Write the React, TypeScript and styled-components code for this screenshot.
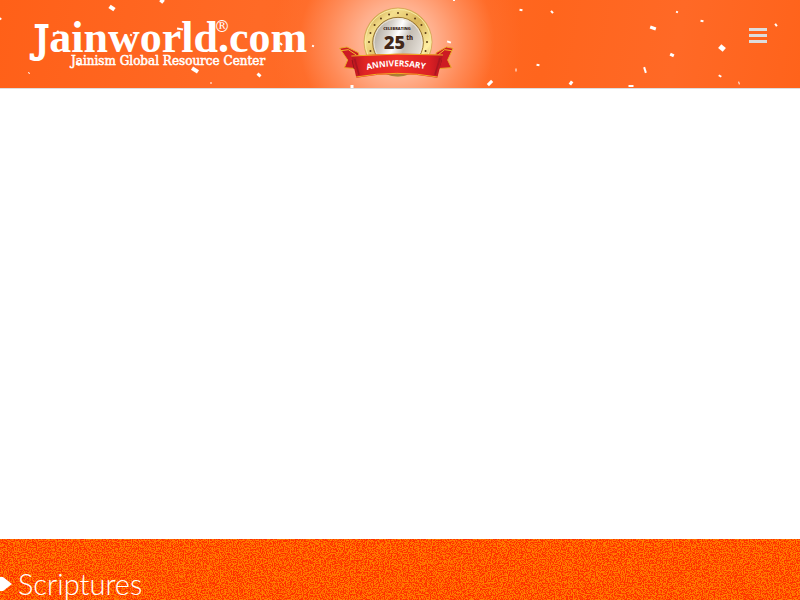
import React from "react";
import styled, { createGlobalStyle } from "styled-components";

const GlobalStyle = createGlobalStyle`
  * { box-sizing: border-box; }
  body { margin: 0; background: #fff; overflow-x: hidden; font-family: "Lato", sans-serif; }
`;

const Page = styled.div`
  display: flex;
  flex-direction: column;
  min-height: 100vh;
`;

const Header = styled.header`
  position: relative;
  display: flex;
  align-items: flex-start;
  padding: 0 33px 0 30px;
  min-height: 89px;
  border-bottom: 1px solid #ddd;
  background:
    radial-gradient(circle 125px at 397px 42px, #ffc3aa 0, #ffb08e 30%, rgba(255, 150, 105, 0.75) 55%, rgba(255, 120, 60, 0.3) 78%, rgba(255, 104, 36, 0) 100%),
    linear-gradient(100deg, #ff6018 0%, #ff6a26 32%, #ff6822 55%, #ff651d 68%, #ff6926 84%, #ff631b 100%);
`;

const Confetti = styled.svg`
  position: absolute;
  inset: 0;
  width: 100%;
  height: 100%;
  fill: #fff;
`;

const Brand = styled.a`
  position: relative;
  display: block;
  width: 280px;
  padding-top: 16px;
  color: #fff;
  text-decoration: none;
`;

const BrandArt = styled.svg`
  display: block;
  overflow: visible;
  fill: #fff;
  font-family: "DejaVu Serif", serif;
`;

const Badge = styled.svg`
  position: relative;
  display: block;
  margin: 6px 0 0 29px;
  overflow: visible;
  font-family: "Open Sans", sans-serif;
`;

const MenuButton = styled.button`
  position: relative;
  display: flex;
  flex-direction: column;
  gap: 3px;
  width: 18px;
  margin: 28px 0 0 auto;
  padding: 0;
  border: 0;
  background: none;
  cursor: pointer;
`;

const MenuBar = styled.span`
  height: 3px;
  background: #ddd;
`;

const Hero = styled.main`
  flex: 0 0 75vh;
  background: #fff;
`;

const Topics = styled.section`
  position: relative;
  flex: 1 0 auto;
  padding-top: 29px;
  background: #ff5500;
`;

const Grain = styled.svg`
  position: absolute;
  inset: 0;
  width: 100%;
  height: 100%;
`;

const TopicTitle = styled.h2`
  position: relative;
  display: flex;
  align-items: center;
  gap: 6px;
  margin: 0;
  color: #fff;
  font-size: 29px;
  line-height: 32px;
  font-weight: 300;
`;

/* x, y, width, height, rotation */
const flakes = [
  [112, 8, 6, 4, 35], [0, 19, 3, 2, -30], [162, 1, 4, 4, 40], [58, 32, 3, 2, 60],
  [131, 35, 2, 2, 20], [180, 29, 6, 2, 10], [29, 73, 2, 1, 40], [78, 64, 4, 3, 20],
  [195, 70, 7, 4, 32], [281, 44, 3, 2, 40], [313, 46, 2, 2, 20], [259, 75, 4, 3, 40],
  [211, 83, 2, 1, 0], [449, 42, 4, 2, 20], [352, 87, 3, 4, 0], [454, 0, 2, 2, 0],
  [521, 10, 3, 2, 10], [552, 12, 3, 2, 50], [538, 65, 3, 2, 10], [516, 70, 1, 3, 0],
  [490, 83, 6, 3, -45], [571, 83, 4, 3, -55], [631, 86, 5, 2, 0], [645, 70, 2, 6, -17],
  [677, 12, 2, 2, 20], [653, 28, 6, 3, 20], [702, 21, 3, 2, 10], [672, 55, 4, 3, 25],
  [722, 48, 6, 5, 40], [776, 25, 3, 2, 55], [720, 76, 3, 2, 30], [739, 83, 1, 3, -15],
];

const stars = Array.from({ length: 13 }, (_, i) => {
  const angle = ((162 + i * 18) * Math.PI) / 180;
  return [205 + 87 * Math.cos(angle), 126 + 87 * Math.sin(angle)];
});

function AnniversaryBadge() {
  return (
    <Badge width="114" height="72" viewBox="28 18 342 216" role="img" aria-label="Celebrating 25th anniversary">
      <defs>
        <linearGradient id="gold" x1="0" y1="0" x2="1" y2="1">
          <stop offset="0" stopColor="#b98b2e" />
          <stop offset=".25" stopColor="#f5e08e" />
          <stop offset=".5" stopColor="#d8b458" />
          <stop offset=".75" stopColor="#fff0a4" />
          <stop offset="1" stopColor="#9a6b21" />
        </linearGradient>
        <linearGradient id="silver" x1="0" x2="1" y1=".2" y2=".6">
          <stop offset="0" stopColor="#a9a39a" />
          <stop offset=".3" stopColor="#d7d2cb" />
          <stop offset=".48" stopColor="#ffffff" />
          <stop offset=".68" stopColor="#c5beb4" />
          <stop offset="1" stopColor="#e7e2db" />
        </linearGradient>
        <linearGradient id="ribbon" x1="0" x2="1">
          <stop offset="0" stopColor="#b8151e" />
          <stop offset=".15" stopColor="#e02424" />
          <stop offset=".5" stopColor="#ef3027" />
          <stop offset=".85" stopColor="#dc2024" />
          <stop offset="1" stopColor="#b8151e" />
        </linearGradient>
      </defs>
      <circle cx="205" cy="126" r="102" fill="url(#gold)" stroke="#c99d43" strokeWidth="2" />
      <circle cx="205" cy="126" r="98" fill="none" stroke="#f8e9a2" strokeWidth="3" />
      <circle cx="205" cy="128" r="76" fill="url(#silver)" stroke="#9b752c" strokeWidth="3" />
      <circle cx="205" cy="128" r="72" fill="none" stroke="#eee7d5" strokeWidth="3" />
      {stars.map(([x, y], i) => <circle key={i} cx={x} cy={y} r="3" fill="#5b3c16" />)}
      <text x="202" y="91" textAnchor="middle" fontSize="12" fontWeight="800" fill="#3a2418">CELEBRATING</text>
      <text x="163" y="147" fontSize="54" fontWeight="800" fill="#412718">25</text>
      <text x="230" y="119" fontSize="18" fontWeight="800" fill="#412718">th</text>
      <path d="M30 145L52 141L86 158L98 207L44 203L54 180Z" fill="#cd1b23" stroke="#e9a928" strokeWidth="3" />
      <path d="M370 145L350 141L320 158L306 207L365 203L354 180Z" fill="#cd1b23" stroke="#e9a928" strokeWidth="3" />
      <path d="M34 152L56 149L80 165M366 152L345 149L325 165" fill="none" stroke="#f2b92b" strokeWidth="3" />
      <path d="M66 180L72 206L86 210L78 178ZM337 180L329 206L318 210L326 178Z" fill="#80151b" />
      <path d="M166 221Q202 217 241 221Q205 238 166 221Z" fill="#a78135" />
      <path d="M65 167Q202 157 340 164L323 233Q202 211 80 233Z" fill="url(#ribbon)" />
      <path d="M65 168Q202 158 340 165M79 231Q202 209 324 231" fill="none" stroke="#f0ae25" strokeWidth="3" />
      <path d="M75 176L88 224M331 174L316 224" fill="none" stroke="#a91520" strokeWidth="5" />
      <path id="anniversaryLine" d="M112 210Q202 186 310 213" fill="none" />
      <text fontSize="25" fontWeight="700" fill="#fff"><textPath href="#anniversaryLine">ANNIVERSARY</textPath></text>
    </Badge>
  );
}

export default function App() {
  return (
    <>
      <GlobalStyle />
      <Page>
        <Header>
          <Confetti aria-hidden="true">
            {flakes.map(([x, y, w, h, r], i) => (
              <rect key={i} x={x - w / 2} y={y - h / 2} width={w} height={h} transform={`rotate(${r} ${x} ${y})`} />
            ))}
          </Confetti>
          <Brand href="#" aria-label="Jainworld.com">
            <BrandArt width="280" height="56" viewBox="30 16 280 56">
              <text x="34" y="52" fontSize="44" fontWeight="700" fontFamily="Liberation Serif, serif">
                <tspan fontSize="38" fontWeight="400" fontFamily="DejaVu Serif, serif" stroke="#fff" strokeWidth="2">J</tspan>ainworld.com
              </text>
              <text x="214" y="32" fontSize="16">®</text>
              <text x="71" y="65" fontSize="12" stroke="#fff" strokeWidth="0.5">Jainism Global Resource Center</text>
            </BrandArt>
          </Brand>
          <AnniversaryBadge />
          <MenuButton type="button" aria-label="Open menu">
            <MenuBar /><MenuBar /><MenuBar />
          </MenuButton>
        </Header>
        <Hero />
        <Topics>
          <Grain aria-hidden="true">
            <filter id="grain" x="0" y="0" width="100%" height="100%" colorInterpolationFilters="sRGB">
              <feTurbulence type="fractalNoise" baseFrequency="0.83" numOctaves="3" seed="8" />
              <feColorMatrix values="0 0 0 0 1  2.4 0 0 0 -0.7  0 0 0 0 0  0 0 0 0 1" />
              <feComponentTransfer>
                <feFuncG type="discrete" tableValues="0.19 0.19 0.28 0.4 0.48 0.5" />
              </feComponentTransfer>
            </filter>
            <rect width="100%" height="100%" filter="url(#grain)" />
          </Grain>
          <TopicTitle>
            <svg width="12" height="14" viewBox="0 0 12 14" fill="#fff" aria-hidden="true">
              <path d="M0 0H3L12 7L3 14H0Z" />
            </svg>
            Scriptures
          </TopicTitle>
        </Topics>
      </Page>
    </>
  );
}
